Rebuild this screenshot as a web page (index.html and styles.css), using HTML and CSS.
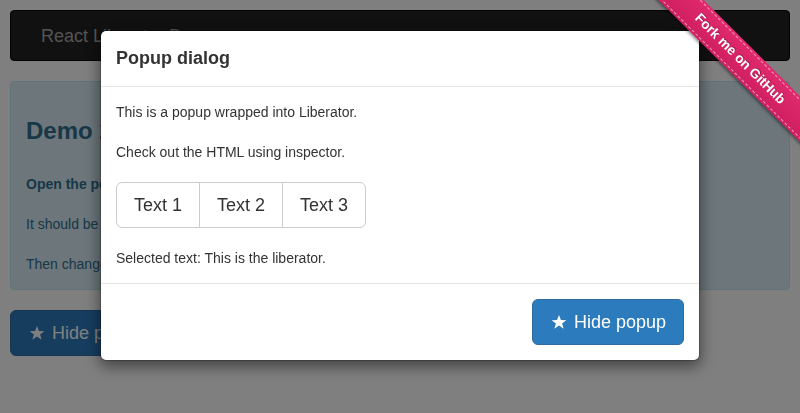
FILE: index.html
```html
<!DOCTYPE html>
<html>
<head>
<meta charset="utf-8">
<title>React Liberator</title>
<link rel="stylesheet" href="styles.css">
</head>
<body>
<div class="page">
  <nav class="navbar"><span class="brand">React Liberator Demo</span></nav>
  <div class="alert">
    <h3 class="alert-title">Demo 2</h3>
    <p class="strong">Open the popup using the button below.</p>
    <p>It should be rendered outside of the parent container.</p>
    <p class="last">Then change the selected text inside the popup.</p>
  </div>
  <button class="btn btn-lg btn-primary" type="button">
    <svg class="star" viewBox="0 0 24 24" width="18" height="16"><polygon points="12,1.5 14.9,9 23,9.2 16.6,14.1 19,22 12,17.4 5,22 7.4,14.1 1,9.2 9.1,9" fill="currentColor"/></svg>Hide popup
  </button>
</div>

<div class="backdrop"></div>

<div class="modal">
  <div class="modal-header"><h4 class="modal-title">Popup dialog</h4></div>
  <div class="modal-body">
    <p>This is a popup wrapped into Liberator.</p>
    <p>Check out the HTML using inspector.</p>
    <div class="btn-group">
      <button class="btn btn-lg btn-default" type="button">Text 1</button><button class="btn btn-lg btn-default" type="button">Text 2</button><button class="btn btn-lg btn-default" type="button">Text 3</button>
    </div>
    <p class="last">Selected text: This is the liberator.</p>
  </div>
  <div class="modal-footer">
    <button class="btn btn-lg btn-primary" type="button">
      <svg class="star" viewBox="0 0 24 24" width="18" height="16"><polygon points="12,1.5 14.9,9 23,9.2 16.6,14.1 19,22 12,17.4 5,22 7.4,14.1 1,9.2 9.1,9" fill="currentColor"/></svg>Hide popup
    </button>
  </div>
</div>

<div class="ribbon-wrap">
  <a class="ribbon" href="#">Fork me on GitHub</a>
</div>
</body>
</html>
```

FILE: styles.css
```css
* { box-sizing: border-box; }

html, body {
  margin: 0;
  height: 100%;
  overflow: hidden;
}

body {
  font-family: "Liberation Sans", Arial, sans-serif;
  font-size: 14px;
  line-height: 20px;
  color: #333;
  background: #fff;
}

.page {
  padding: 10px;
}

.navbar {
  height: 51px;
  background: #222;
  border: 1px solid #080808;
  border-radius: 4px;
  margin-bottom: 20px;
  padding: 0 15px;
  display: flex;
  align-items: center;
}

.brand {
  padding: 0 15px;
  font-size: 18px;
  line-height: 20px;
  color: #a8a8a8;
}

.alert {
  background: #d9edf7;
  border: 1px solid #bce8f1;
  border-radius: 4px;
  color: #31708f;
  padding: 15px;
  margin-bottom: 20px;
}

.alert-title {
  font-size: 24px;
  font-weight: bold;
  line-height: 26px;
  margin: 21px 0 30px;
}

.alert p {
  margin: 0 0 20px;
}

.alert p.strong { font-weight: bold; }
.alert p.last { margin-bottom: 0; }

.btn {
  display: inline-flex;
  align-items: center;
  font-family: inherit;
  border: 1px solid transparent;
  cursor: pointer;
  margin: 0;
}

.btn-lg {
  height: 46px;
  padding: 0 17px;
  font-size: 18px;
  line-height: 24px;
  border-radius: 6px;
}

.btn-primary {
  background: #2c7bbd;
  border-color: #2e6da4;
  color: #fff;
}

.btn-default {
  background: #fff;
  border-color: #ccc;
  color: #333;
}

.star {
  margin-right: 6px;
  flex: none;
}

.backdrop {
  position: fixed;
  inset: 0;
  background: rgba(0, 0, 0, 0.5);
}

.modal {
  position: fixed;
  top: 30px;
  left: 100px;
  width: 600px;
  background: #fff;
  border: 1px solid rgba(0, 0, 0, 0.2);
  border-radius: 6px;
  box-shadow: 0 5px 15px rgba(0, 0, 0, 0.5);
  background-clip: padding-box;
}

.modal-header {
  padding: 15px;
  border-bottom: 1px solid #e5e5e5;
}

.modal-title {
  margin: 0;
  font-size: 18px;
  line-height: 25px;
  font-weight: bold;
  color: #333;
}

.modal-body {
  padding: 15px;
}

.modal-body p {
  margin: 0 0 20px;
}

.modal-body p.last { margin-bottom: 0; }

.btn-group {
  display: flex;
  margin-bottom: 20px;
}

.btn-group .btn {
  border-radius: 0;
}

.btn-group .btn + .btn {
  margin-left: -1px;
}

.btn-group .btn:first-child {
  border-radius: 6px 0 0 6px;
}

.btn-group .btn:last-child {
  border-radius: 0 6px 6px 0;
}

.modal-footer {
  padding: 15px;
  border-top: 1px solid #e5e5e5;
  display: flex;
  justify-content: flex-end;
}

.ribbon-wrap {
  position: fixed;
  top: 0;
  right: 0;
  width: 180px;
  height: 180px;
  overflow: hidden;
}

.ribbon {
  position: absolute;
  top: 43px;
  right: -60px;
  width: 240px;
  height: 32px;
  transform: rotate(45deg);
  background: linear-gradient(#e02a6d, #cf1f60);
  box-shadow: 0 2px 3px rgba(0, 0, 0, 0.4);
  color: #fff;
  font-family: "Liberation Sans", Arial, sans-serif;
  font-weight: bold;
  font-size: 13.5px;
  line-height: 22px;
  text-decoration: none;
  text-align: center;
  padding: 5px 0;
  text-shadow: 0 -1px 0 rgba(0, 0, 0, 0.3);
}

.ribbon::before {
  content: "";
  position: absolute;
  left: 0;
  right: 0;
  top: 2px;
  bottom: 2px;
  border-top: 1px dashed rgba(255, 255, 255, 0.55);
  border-bottom: 1px dashed rgba(255, 255, 255, 0.55);
}
```
